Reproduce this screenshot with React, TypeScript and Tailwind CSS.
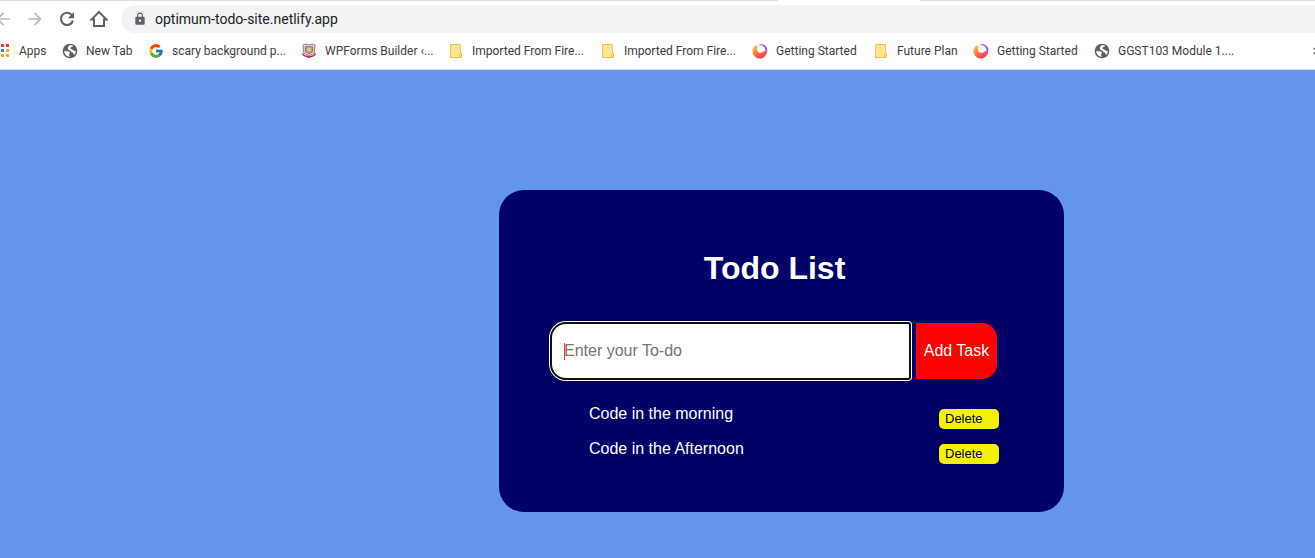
import { MdArrowBack, MdArrowForward, MdLock } from "react-icons/md";
import { FcGoogle } from "react-icons/fc";

function ReloadIcon() {
  return (
    <svg viewBox="0 0 20 20" className="size-5" aria-hidden="true">
      <path
        d="M14.9 6.2A6.1 6.1 0 1 0 15.9 11.6"
        fill="none"
        stroke="#5f6368"
        strokeWidth="2.1"
      />
      <path d="M17 3V9.2H10.8Z" fill="#5f6368" />
    </svg>
  );
}

function HomeIcon() {
  return (
    <svg viewBox="0 0 20 20" className="size-5" aria-hidden="true">
      <path
        d="M10 3 2.6 10.4H5V17H15V10.4H17.4Z"
        fill="none"
        stroke="#5f6368"
        strokeWidth="2"
      />
    </svg>
  );
}

function AppsIcon() {
  const colors = ["#f03a2e", "#f03a2e", "#1e88e5", "#fbb004", "#fbaa04", "#fbaa04"];
  return (
    <svg viewBox="0 0 10 14" className="h-3.5 w-2.5" aria-hidden="true">
      {colors.map((color, i) => (
        <rect
          key={i}
          x={1 + (i % 2) * 5}
          y={Math.floor(i / 2) * 5}
          width="3"
          height="3"
          fill={color}
        />
      ))}
    </svg>
  );
}

function GlobeIcon() {
  return (
    <svg viewBox="0 0 16 16" className="size-4" aria-hidden="true">
      <circle cx="8" cy="8" r="7.3" fill="#5f6368" />
      <path
        d="M2.2 8C4 8.4 7.6 7.8 7.9 9.6 8 10.6 6.8 10.8 7 12 7.1 12.8 7.8 13.2 8 13.8 4.8 13.8 2.2 11.2 2.2 8Z"
        fill="#fff"
      />
      <path
        d="M7.4 2.3C9 2 10.4 2.6 11.2 3.1 10.9 4.3 8.4 4.1 8.3 5.1 8.2 6 9.4 6 10.2 6.5 11.2 7.1 11.4 8.2 13.7 8 13.7 9.4 13.2 10.8 12.2 11.8 11.3 11.4 11.5 9.8 10.3 9.3 9.2 8.8 8.8 7.7 7.4 7.2 6.2 6.8 5.6 6.3 5.8 5 6 4 6.6 3 7.4 2.3Z"
        fill="#fff"
      />
    </svg>
  );
}

function CrestIcon() {
  return (
    <svg viewBox="0 0 16 16" className="size-4" aria-hidden="true">
      <path d="M2 2 5 1 8 2 11 1 14 2 13.2 10 8 13 2.8 10Z" fill="#e2d2cf" stroke="#a37c7c" />
      <path d="M4.5 3.8H11.5V8.5L8 11 4.5 8.5Z" fill="#9aa6cc" stroke="#bb5a64" />
      <circle cx="8" cy="6.4" r="1.8" fill="#f0d34d" />
      <path
        d="M1.5 10.5C3 14 5.5 13 8 14.2 10.5 13 13 14 14.5 10.5"
        fill="none"
        stroke="#a62f45"
        strokeWidth="1.6"
      />
    </svg>
  );
}

function FolderIcon() {
  return (
    <svg viewBox="0 0 16 16" className="size-4" aria-hidden="true">
      <path d="M2.5 1.5H12.5V10.5H13.5V14.5H2.5Z" fill="#ffe694" stroke="#e9c34b" />
      <path d="M11.5 14.5V11.5L12.5 10.5" fill="none" stroke="#e9c34b" />
    </svg>
  );
}

function FirefoxIcon() {
  return (
    <svg viewBox="0 0 16 16" className="size-4" aria-hidden="true">
      <defs>
        <linearGradient id="flame" x1="0.1" y1="0" x2="0.7" y2="1">
          <stop offset="0" stopColor="#ffd23a" />
          <stop offset="0.45" stopColor="#ff803c" />
          <stop offset="1" stopColor="#f2325f" />
        </linearGradient>
        <linearGradient id="tail" x1="0" y1="0" x2="1" y2="1">
          <stop offset="0" stopColor="#c08cff" />
          <stop offset="1" stopColor="#8446f0" />
        </linearGradient>
      </defs>
      <path
        d="M3 2.4C4.4 2.4 5.6 2.8 6.2 3.6 4.6 4.8 4.4 7.4 6 8.9 8 10.6 11.3 9.6 12.2 7.4 13.4 8.4 14.4 8 15.2 7 15.5 11.5 12.3 15.5 8 15.5 3.7 15.5.5 12 .6 8 .6 5.8 1.6 3.6 3 2.4Z"
        fill="url(#flame)"
      />
      <path d="M7 1.4C11-.2 15.8 3.2 15.2 7.4 14.6 8.4 13.8 8.2 13.4 7.4 13.4 4.4 11 2 7 2.3Z" fill="url(#tail)" />
    </svg>
  );
}

function GoogleIcon() {
  return <FcGoogle className="size-4" aria-hidden="true" />;
}

const bookmarks = [
  { label: "New Tab", Icon: GlobeIcon, width: "w-[46px]" },
  { label: "scary background p...", Icon: GoogleIcon, width: "w-[113px]" },
  { label: "WPForms Builder ‹...", Icon: CrestIcon, width: "w-[107px]" },
  { label: "Imported From Fire...", Icon: FolderIcon, width: "w-[112px]" },
  { label: "Imported From Fire...", Icon: FolderIcon, width: "w-[112px]" },
  { label: "Getting Started", Icon: FirefoxIcon, width: "w-[81px]" },
  { label: "Future Plan", Icon: FolderIcon, width: "w-[60px]" },
  { label: "Getting Started", Icon: FirefoxIcon, width: "w-[81px]" },
  { label: "GGST103 Module 1....", Icon: GlobeIcon, width: "w-[114px]" },
];

const tasks = ["Code in the morning", "Code in the Afternoon"];

function BrowserBar() {
  return (
    <header className="border-b border-[#dadce0] bg-white font-[Roboto,sans-serif]">
      <div className="flex h-px">
        <div className="w-[778px] bg-[#dadce0]" />
        <div className="w-[142px]" />
        <div className="flex-1 bg-[#dadce0]" />
      </div>
      <div className="flex items-center overflow-hidden pt-1">
        <nav className="-ml-[7px] flex shrink-0 items-center gap-3 pr-3 text-[#5f6368]">
          <button type="button" aria-label="Back" className="text-[#babcbe]">
            <MdArrowBack className="size-5" />
          </button>
          <button type="button" aria-label="Forward" className="text-[#babcbe]">
            <MdArrowForward className="size-5" />
          </button>
          <button type="button" aria-label="Reload">
            <ReloadIcon />
          </button>
          <button type="button" aria-label="Home">
            <HomeIcon />
          </button>
        </nav>
        <div className="flex h-7 flex-1 items-center gap-2 rounded-l-full bg-[#f1f3f4] pl-3">
          <MdLock className="size-3.5 shrink-0 text-[#5f6368]" aria-hidden="true" />
          <input
            aria-label="Address"
            defaultValue="optimum-todo-site.netlify.app"
            className="min-w-0 flex-1 bg-transparent text-sm text-[#202124] outline-none"
          />
        </div>
      </div>
      <nav className="flex h-9 items-center gap-4 overflow-hidden text-xs whitespace-nowrap text-[#3c4043]">
        <a href="#apps" className="flex shrink-0 items-center gap-[9px]">
          <AppsIcon />
          <span className="w-[27px]">Apps</span>
        </a>
        {bookmarks.map(({ label, Icon, width }, i) => (
          <a key={i} href="#bookmark" className="flex shrink-0 items-center gap-2">
            <Icon />
            <span className={width}>{label}</span>
          </a>
        ))}
        <button type="button" aria-label="More bookmarks" className="-mr-1.5 ml-auto shrink-0">
          <svg viewBox="0 0 8 8" className="size-2" aria-hidden="true">
            <path d="M.5 1 3.5 4 .5 7M4.5 1 7.5 4 4.5 7" fill="none" stroke="#5f6368" strokeWidth="1.2" />
          </svg>
        </button>
      </nav>
    </header>
  );
}

export default function App() {
  return (
    <div className="flex min-h-screen flex-col bg-[#6495ed] font-['Liberation_Sans',Arial,sans-serif]">
      <BrowserBar />
      <main className="flex flex-1 items-start justify-center pt-[120px] pl-[248px]">
        <section className="w-full max-w-[565px] rounded-[25px] bg-[#000066] pt-[60px] pr-[65px] pb-12 pl-[51px] text-white">
          <h1 className="text-center text-[32px] leading-9 font-bold">Todo List</h1>
          <form className="mt-9 flex items-center gap-[5px] pr-0.5" onSubmit={(e) => e.preventDefault()}>
            <div className="relative flex min-w-0 flex-1">
              <input
                aria-label="Enter your To-do"
                placeholder="Enter your To-do"
                className="h-[58px] w-full rounded-l-[16px] rounded-r-[3px] border-2 border-[#101010] bg-white px-3 text-base text-black ring-1 ring-white outline-none placeholder:text-[#757575]"
              />
              <span className="absolute top-[21px] left-3.5 h-[17px] w-px bg-[#ff4500]" />
            </div>
            <button type="submit" className="h-14 w-[81px] shrink-0 rounded-r-[15px] bg-[#ff0000] text-base">
              Add Task
            </button>
          </form>
          <ul className="mt-6 flex flex-col gap-2.5">
            {tasks.map((task) => (
              <li key={task} className="flex h-[25px] justify-between pl-[39px]">
                <span className="leading-5">{task}</span>
                <button
                  type="button"
                  className="h-5 w-[60px] self-end rounded-[5px] bg-[#f3f300] pl-1.5 text-left text-[13px] leading-5 text-black"
                >
                  Delete
                </button>
              </li>
            ))}
          </ul>
        </section>
      </main>
    </div>
  );
}
